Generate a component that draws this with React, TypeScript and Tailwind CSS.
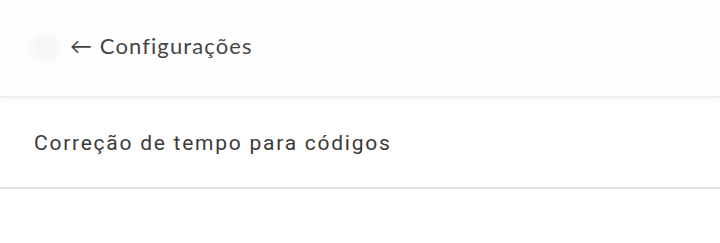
export default function App() {
  return (
    <div className="w-[720px] h-[243px] bg-white overflow-hidden">
      <header className="relative z-10 h-[97px] bg-[#fefefe] flex items-center shadow-[0_2px_4px_rgba(0,0,0,0.06)] border-b border-[#ececec]">
        <div className="ml-[30px] w-[30px] h-[30px] rounded-full bg-[#f6f6f6] blur-[4px]" />
        <span className="ml-[10px] -mt-[6px] text-[22px] text-[#454545] font-['Lato',sans-serif] tracking-[1.1px]">
          ← Configurações
        </span>
      </header>
      <div className="h-[92px] flex items-center px-[34px] border-b-2 border-[#e3e3e3]">
        <span className="mt-[3px] text-[21px] text-[#3a3a3a] font-['Roboto',sans-serif] tracking-[1.75px]">
          Correção de tempo para códigos
        </span>
      </div>
    </div>
  )
}
